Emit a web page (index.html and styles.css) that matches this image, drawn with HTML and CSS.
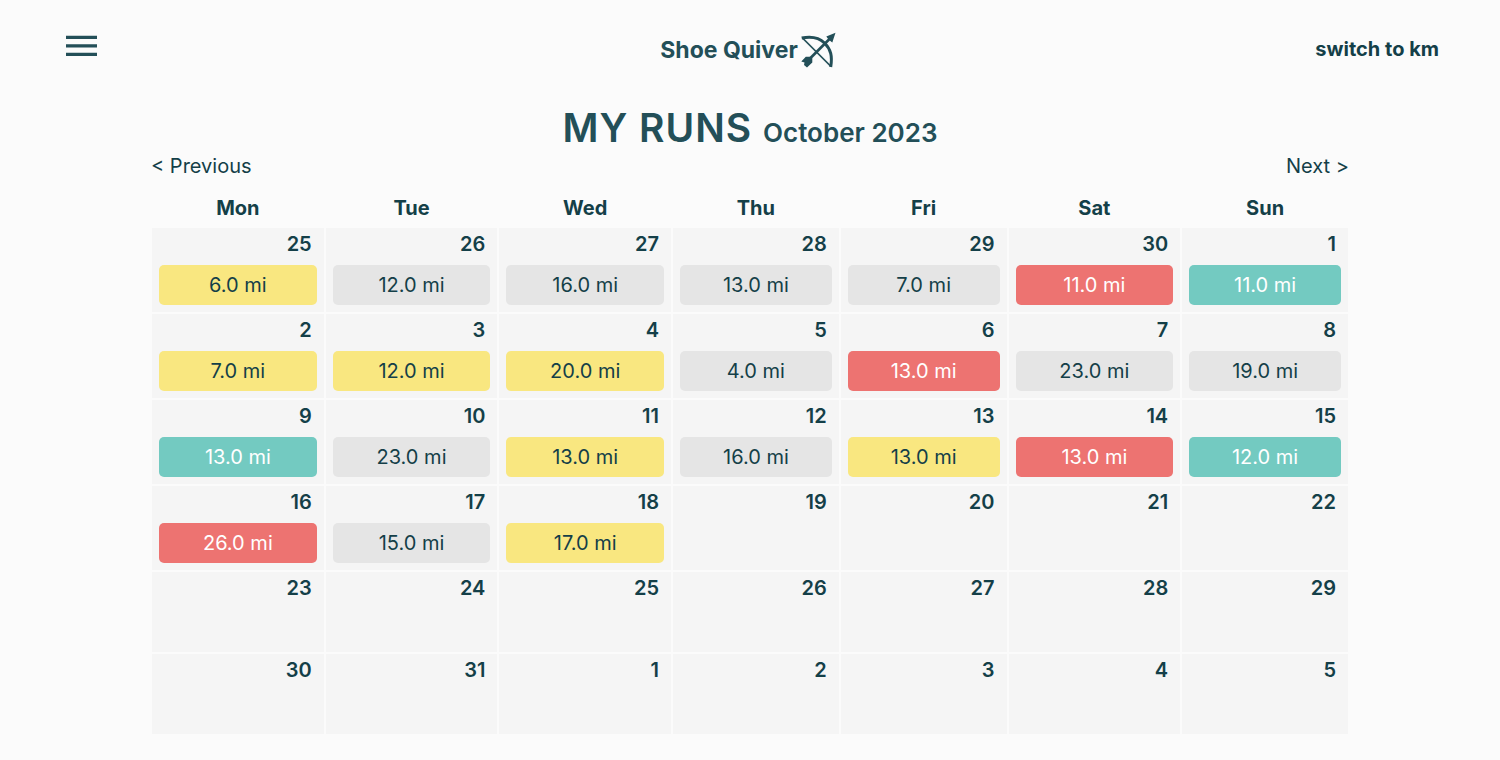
FILE: index.html
```html
<!DOCTYPE html>
<html lang="en">
<head>
<meta charset="utf-8">
<meta name="viewport" content="width=device-width, initial-scale=1">
<title>Shoe Quiver</title>
<link rel="stylesheet" href="styles.css">
</head>
<body>
<header class="topbar">
  <button class="menu" type="button" aria-label="Menu">
    <svg width="32" height="22" viewBox="0 0 32 22" fill="#234f58" aria-hidden="true"><path d="M1 .7h31v3.300H1zM1 9.200h31v3.300H1zM1 17.800h31v3.300H1z"/></svg>
  </button>
  <a class="brand" href="#">Shoe Quiver
    <svg class="bow" width="35" height="36" viewBox="0 0 35 36" fill="none" stroke="#234f58" aria-hidden="true">
      <path d="M.7 6C9 4.300 17 4.500 23.500 11S31.500 24 29.700 35" stroke-width="3"/>
      <path d="M2 6.500 29.500 34" stroke-width="1.700"/>
      <path d="M5 30.500 29 6.500" stroke-width="2.600"/>
      <path d="M34.500 .8 31.300 10.500l-2.300-1.700-2-2-1.700-2.300zM.3 29.500l4.500-4.700h4.700l1.800 1.500v4.200L6 35.500l-3-2.500.5-2.500z" fill="#234f58" stroke="none"/>
    </svg>
  </a>
  <button class="units" type="button">switch to km</button>
</header>
<main class="runs">
  <h1 class="title">MY RUNS <span class="month">October 2023</span></h1>
  <nav class="pager" aria-label="Month">
    <a href="#">&lt; Previous</a>
    <a href="#">Next &gt;</a>
  </nav>
  <table class="calendar">
    <colgroup><col class="wide"><col class="wide"><col class="wide"><col class="narrow"><col class="narrow"><col class="wide"><col class="narrow"></colgroup>
    <thead>
      <tr><th scope="col">Mon</th><th scope="col">Tue</th><th scope="col">Wed</th><th scope="col">Thu</th><th scope="col">Fri</th><th scope="col">Sat</th><th scope="col">Sun</th></tr>
    </thead>
    <tbody>
      <tr>
        <td><div class="date">25</div><a class="run yellow" href="#">6.0 mi</a></td>
        <td><div class="date">26</div><a class="run" href="#">12.0 mi</a></td>
        <td><div class="date">27</div><a class="run" href="#">16.0 mi</a></td>
        <td><div class="date">28</div><a class="run" href="#">13.0 mi</a></td>
        <td><div class="date">29</div><a class="run" href="#">7.0 mi</a></td>
        <td><div class="date">30</div><a class="run red" href="#">11.0 mi</a></td>
        <td><div class="date">1</div><a class="run teal" href="#">11.0 mi</a></td>
      </tr>
      <tr>
        <td><div class="date">2</div><a class="run yellow" href="#">7.0 mi</a></td>
        <td><div class="date">3</div><a class="run yellow" href="#">12.0 mi</a></td>
        <td><div class="date">4</div><a class="run yellow" href="#">20.0 mi</a></td>
        <td><div class="date">5</div><a class="run" href="#">4.0 mi</a></td>
        <td><div class="date">6</div><a class="run red" href="#">13.0 mi</a></td>
        <td><div class="date">7</div><a class="run" href="#">23.0 mi</a></td>
        <td><div class="date">8</div><a class="run" href="#">19.0 mi</a></td>
      </tr>
      <tr>
        <td><div class="date">9</div><a class="run teal" href="#">13.0 mi</a></td>
        <td><div class="date">10</div><a class="run" href="#">23.0 mi</a></td>
        <td><div class="date">11</div><a class="run yellow" href="#">13.0 mi</a></td>
        <td><div class="date">12</div><a class="run" href="#">16.0 mi</a></td>
        <td><div class="date">13</div><a class="run yellow" href="#">13.0 mi</a></td>
        <td><div class="date">14</div><a class="run red" href="#">13.0 mi</a></td>
        <td><div class="date">15</div><a class="run teal" href="#">12.0 mi</a></td>
      </tr>
      <tr>
        <td><div class="date">16</div><a class="run red" href="#">26.0 mi</a></td>
        <td><div class="date">17</div><a class="run" href="#">15.0 mi</a></td>
        <td><div class="date">18</div><a class="run yellow" href="#">17.0 mi</a></td>
        <td><div class="date">19</div></td>
        <td><div class="date">20</div></td>
        <td><div class="date">21</div></td>
        <td><div class="date">22</div></td>
      </tr>
      <tr>
        <td><div class="date">23</div></td>
        <td><div class="date">24</div></td>
        <td><div class="date">25</div></td>
        <td><div class="date">26</div></td>
        <td><div class="date">27</div></td>
        <td><div class="date">28</div></td>
        <td><div class="date">29</div></td>
      </tr>
      <tr>
        <td><div class="date">30</div></td>
        <td><div class="date">31</div></td>
        <td><div class="date">1</div></td>
        <td><div class="date">2</div></td>
        <td><div class="date">3</div></td>
        <td><div class="date">4</div></td>
        <td><div class="date">5</div></td>
      </tr>
    </tbody>
  </table>
</main>
</body>
</html>
```
FILE: styles.css
```css
* { box-sizing: border-box; }

body {
  margin: 0;
  background: #fbfbfb;
  color: #143f48;
  font-family: Inter, "Liberation Sans", sans-serif;
  font-size: 20px;
  line-height: 24px;
}

a { color: inherit; text-decoration: none; }

button {
  padding: 0;
  border: 0;
  background: none;
  color: inherit;
  font: inherit;
  cursor: pointer;
}

.topbar {
  display: grid;
  grid-template-columns: 1fr auto 1fr;
  align-items: center;
  height: 100px;
  padding: 0 61px;
}

.menu { justify-self: start; height: 32px; margin: 0 0 8px 4px; }
.menu svg { display: block; }

.brand {
  display: flex;
  align-items: center;
  gap: 3px;
  margin-right: 4px;
  color: #234f58;
  font-size: 23px;
  font-weight: 700;
}

.units { justify-self: end; margin-bottom: 2px; font-weight: 700; }

.runs { width: 80%; margin: 0 auto; padding: 5px 0 20px; }

.title {
  margin: 0;
  color: #234f58;
  font-size: 39px;
  font-weight: 600;
  letter-spacing: 1px;
  line-height: 46px;
  text-align: center;
}

.month { font-size: 26px; letter-spacing: 0; }

.pager {
  display: flex;
  justify-content: space-between;
  padding: 0 1px;
  line-height: 20px;
}

.calendar {
  width: 100%;
  margin-top: 16px;
  border-spacing: 2px;
  table-layout: fixed;
}

.wide { width: 14.5%; }
.narrow { width: 14%; }

th { height: 32px; padding: 0 0 4px; font-weight: 700; }

td {
  height: 80px;
  padding: 4px 7px 7px;
  background: #f5f5f5;
  vertical-align: top;
}

.date {
  padding: 0 5px 9px;
  font-weight: 600;
  text-align: right;
}

.run {
  display: block;
  border-radius: 5px;
  background: #e5e5e5;
  line-height: 40px;
  text-align: center;
}

.yellow { background: #f9e780; }
.red { background: #ed7371; color: #ffffff; }
.teal { background: #73cac1; color: #ffffff; }
```
